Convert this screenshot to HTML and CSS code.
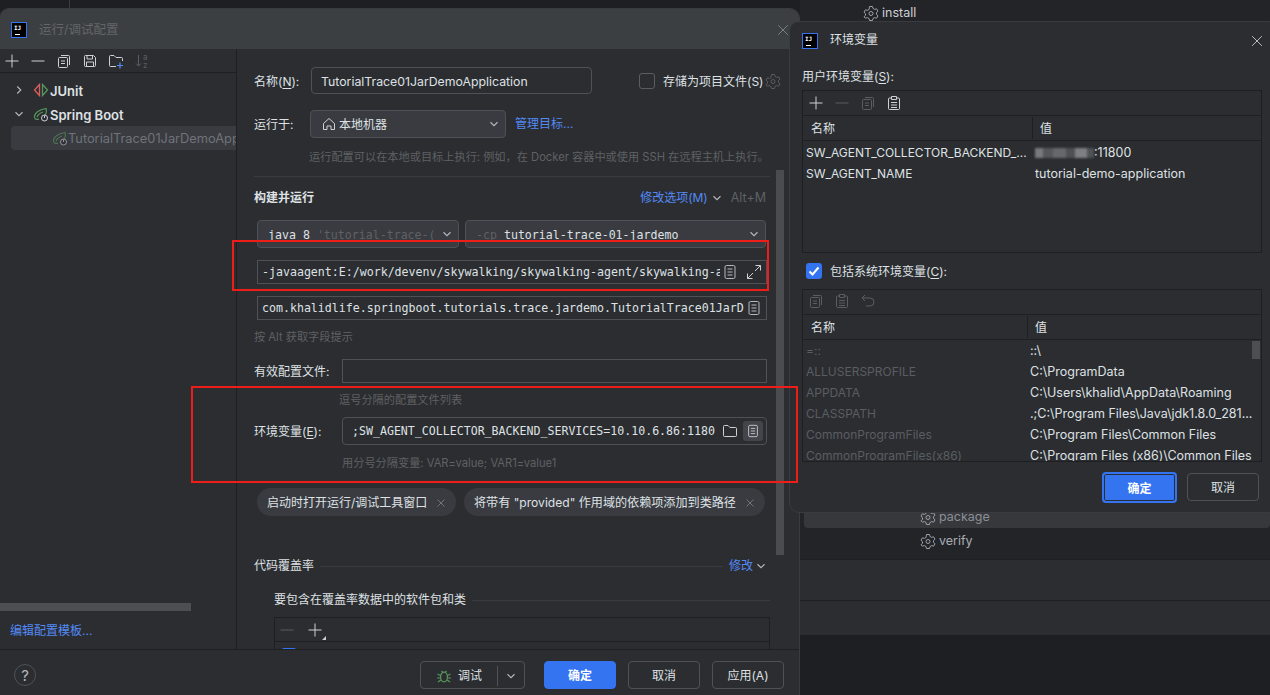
FILE: index.html
```html
<!DOCTYPE html>
<html lang="zh">
<head>
<meta charset="utf-8">
<title>运行/调试配置</title>
<link rel="stylesheet" href="styles.css">
</head>
<body>
<svg class="defs" width="0" height="0">
  <symbol id="gear" viewBox="0 0 16 16"><path d="M6.500 1.500h3l.5 2 1.600.9 2-.6 1.400 2.400-1.500 1.400v1.800l1.500 1.400-1.400 2.400-2-.6-1.600.9-.5 2h-3l-.5-2-1.600-.9-2 .6L1 11.800l1.500-1.400V8.600L1 7.200l1.400-2.400 2 .6L6 4.500z" fill="none" stroke="currentColor"/><circle cx="8" cy="8.500" r="2" fill="none" stroke="currentColor"/></symbol>
  <symbol id="copy" viewBox="0 0 16 16"><path d="M5 2.500h7.500a1 1 0 0 1 1 1V12M2.500 5.500a1 1 0 0 1 1-1h7a1 1 0 0 1 1 1v8a1 1 0 0 1-1 1h-7a1 1 0 0 1-1-1zM5 8h4M5 10.500h4" fill="none" stroke="currentColor"/></symbol>
  <symbol id="paste" viewBox="0 0 16 16"><path d="M5 3H3.500a1 1 0 0 0-1 1v9.500a1 1 0 0 0 1 1h9a1 1 0 0 0 1-1V4a1 1 0 0 0-1-1H11M5.500 1.500h5v3h-5zM5 7.500h6M5 10h6M5 12.500h6" fill="none" stroke="currentColor"/></symbol>
  <symbol id="plus" viewBox="0 0 16 16"><path d="M8 1.500v13M1.500 8h13" fill="none" stroke="currentColor"/></symbol>
  <symbol id="minus" viewBox="0 0 16 16"><path d="M1.500 8h13" fill="none" stroke="currentColor"/></symbol>
  <symbol id="chev" viewBox="0 0 16 16"><path d="M4 6l4 4 4-4" fill="none" stroke="currentColor" stroke-width="1.300"/></symbol>
  <symbol id="doc" viewBox="0 0 16 16"><rect x="3" y="1.500" width="10" height="13" rx="1.500" fill="none" stroke="currentColor"/><path d="M5.500 5h5M5.500 8h5M5.500 11h5" stroke="currentColor"/></symbol>
  <symbol id="spring" viewBox="0 0 16 16"><path d="M1.500 12C1 7 6 3.500 13 2.500c1 3.500-.5 6.500-2 8M1.500 12.500C3 13.500 5 13.500 6 13M4 11c1-2.500 3-4 6-5" fill="none" stroke="#57965c" stroke-width="1.200"/><circle cx="11.500" cy="12" r="3" fill="#2b2d30" stroke="#ced0d6"/><path d="M11.500 9.500v2.500" stroke="#ced0d6"/></symbol>
</svg>

<div class="ide">
  <div class="ide-left"><span class="ide-tick"></span></div>
  <div class="ide-right">
    <div class="maven-row maven-top"><svg class="ic16 gear-dim"><use href="#gear"/></svg><span>install</span></div>
    <div class="maven-selected"><svg class="ic16 gear-dim"><use href="#gear"/></svg><span>package</span></div>
    <div class="maven-row maven-verify"><svg class="ic16 gear-dim"><use href="#gear"/></svg><span>verify</span></div>
    <div class="band band-a"></div>
    <div class="band band-b"></div>
  </div>
</div>

<section class="win win-main">
  <header class="win-title">
    <span class="ij"><b>IJ</b><i></i></span>
    <span class="title-text">运行/调试配置</span>
    <svg class="ic16 close-dim" viewBox="0 0 16 16"><path d="M2.500 2.500l11 11M13.500 2.500l-11 11" fill="none" stroke="currentColor"/></svg>
  </header>
  <div class="main-body">
    <aside class="side">
      <div class="side-tools">
        <svg class="ic16"><use href="#plus"/></svg>
        <svg class="ic16"><use href="#minus"/></svg>
        <svg class="ic16"><use href="#copy"/></svg>
        <svg class="ic16" viewBox="0 0 16 16"><path d="M2.500 3.500a1 1 0 0 1 1-1h8l2 2v8a1 1 0 0 1-1 1h-9a1 1 0 0 1-1-1zM5 2.500v3.500h5.500V2.500M4.500 13.500V9h7v4.500" fill="none" stroke="currentColor"/></svg>
        <svg class="ic16" viewBox="0 0 16 16"><path d="M8 13.500H2.500a1 1 0 0 1-1-1v-9a1 1 0 0 1 1-1h3.500l2 2h5.500a1 1 0 0 1 1 1V8" fill="none" stroke="currentColor"/><path d="M12 9.500v6M9 12.500h6" stroke="#548af7" stroke-width="1.200"/></svg>
        <svg class="ic16 dim" viewBox="0 0 16 16"><path d="M4.500 2v11M2 10.500l2.500 2.500 2.500-2.500" fill="none" stroke="currentColor"/><text x="9" y="7" class="sort-l">a</text><text x="9" y="15" class="sort-l">z</text></svg>
      </div>
      <div class="tree">
        <div class="tree-row">
          <svg class="ic-chev side-r" viewBox="0 0 16 16"><path d="M6 4l4 4-4 4" fill="none" stroke="currentColor" stroke-width="1.300"/></svg>
          <svg class="ic16" viewBox="0 0 16 16"><path d="M6.500 2.500L1.500 8l5 5.500z" fill="none" stroke="#db5c5c" stroke-width="1.300"/><path d="M9.500 2.500l5 5.500-5 5.500z" fill="none" stroke="#57965c" stroke-width="1.300"/></svg>
          <strong>JUnit</strong>
        </div>
        <div class="tree-row">
          <svg class="ic-chev"><use href="#chev"/></svg>
          <svg class="ic16"><use href="#spring"/></svg>
          <strong>Spring Boot</strong>
        </div>
        <div class="tree-row tree-sel">
          <svg class="ic16 faded"><use href="#spring"/></svg>
          <span>TutorialTrace01JarDemoApplication</span>
        </div>
      </div>
      <div class="side-bottom">
        <div class="hscroll"></div>
        <a class="link side-link">编辑配置模板...</a>
      </div>
    </aside>
    <main class="form">
      <div class="vscroll"></div>
      <div class="row row-name">
        <label class="lbl lbl-name">名称(<u>N</u>):</label>
        <div class="input input-name">TutorialTrace01JarDemoApplication</div>
        <span class="check"></span>
        <span class="check-label">存储为项目文件(S)</span>
        <svg class="ic16 dim gear-s"><use href="#gear"/></svg>
      </div>
      <div class="row row-run">
        <label class="lbl lbl-run">运行于:</label>
        <div class="combo combo-run">
          <svg class="ic16 home" viewBox="0 0 16 16"><path d="M2.500 7.500L8 2.500l5.500 5v6h-3.500V10H6v3.500H2.500z" fill="none" stroke="currentColor"/></svg>
          <span class="grow">本地机器</span>
          <svg class="ic-chev"><use href="#chev"/></svg>
        </div>
        <a class="link manage">管理目标...</a>
      </div>
      <p class="hint hint-run">运行配置可以在本地或目标上执行: 例如，在 Docker 容器中或使用 SSH 在远程主机上执行。</p>
      <div class="sep"></div>
      <div class="section section-build">
        <h2>构建并运行</h2>
        <a class="link mod">修改选项(M)</a>
        <svg class="ic-chev side-c"><use href="#chev"/></svg>
        <span class="alt">Alt+M</span>
      </div>
      <div class="row row-combos">
        <div class="combo combo-java mono"><span class="grow clip">java 8 <em>'tutorial-trace-(</em></span><svg class="ic-chev"><use href="#chev"/></svg></div>
        <div class="combo combo-cp mono"><span class="grow clip"><em>-cp</em> tutorial-trace-01-jardemo</span><svg class="ic-chev"><use href="#chev"/></svg></div>
      </div>
      <div class="box box-agent mono">
        <span class="clip grow">-javaagent:E:/work/devenv/skywalking/skywalking-agent/skywalking-a</span>
        <svg class="ic16 doc"><use href="#doc"/></svg>
        <svg class="ic16 expand" viewBox="0 0 16 16"><path d="M9.500 1.500h5v5M14.500 1.500L9 7M6.500 14.500h-5v-5M1.500 14.500L7 9" fill="none" stroke="currentColor"/></svg>
      </div>
      <div class="box box-main mono">
        <span class="clip grow">com.khalidlife.springboot.tutorials.trace.jardemo.TutorialTrace01JarD</span>
        <svg class="ic16 doc"><use href="#doc"/></svg>
      </div>
      <p class="hint hint-alt">按 Alt 获取字段提示</p>
      <div class="row row-profile">
        <label class="lbl lbl-long">有效配置文件:</label>
        <div class="box box-profile"></div>
      </div>
      <p class="hint hint-profile">逗号分隔的配置文件列表</p>
      <div class="row row-env">
        <label class="lbl lbl-long">环境变量(<u>E</u>):</label>
        <div class="input input-env mono">
          <span class="clip grow">;SW_AGENT_COLLECTOR_BACKEND_SERVICES=10.10.6.86:1180</span>
          <svg class="ic16 folder" viewBox="0 0 16 16"><path d="M1.500 12.500v-9a1 1 0 0 1 1-1h3.500l2 2h5.500a1 1 0 0 1 1 1v7a1 1 0 0 1-1 1h-11a1 1 0 0 1-1-1z" fill="none" stroke="currentColor"/></svg>
          <span class="doc-hover"><svg class="ic16 doc-in"><use href="#doc"/></svg></span>
        </div>
      </div>
      <p class="hint hint-env">用分号分隔变量: VAR=value; VAR1=value1</p>
      <div class="row row-chips">
        <span class="chip chip-a">启动时打开运行/调试工具窗口<svg class="chip-x" viewBox="0 0 10 10"><path d="M1.500 1.500l7 7M8.500 1.500l-7 7" fill="none" stroke="currentColor"/></svg></span>
        <span class="chip chip-b">将带有 "provided" 作用域的依赖项添加到类路径<svg class="chip-x" viewBox="0 0 10 10"><path d="M1.500 1.500l7 7M8.500 1.500l-7 7" fill="none" stroke="currentColor"/></svg></span>
      </div>
      <div class="section section-cov">
        <span class="cov-title">代码覆盖率</span>
        <span class="rule"></span>
        <a class="link cov-mod">修改</a>
        <svg class="ic-chev"><use href="#chev"/></svg>
      </div>
      <div class="section section-inc">
        <span class="cov-title">要包含在覆盖率数据中的软件包和类</span>
        <span class="rule"></span>
      </div>
      <div class="cov-table">
        <div class="cov-tools">
          <svg class="ic16 dim"><use href="#minus"/></svg>
          <span class="plus-wrap"><svg class="ic16"><use href="#plus"/></svg><span class="corner"></span></span>
        </div>
        <div class="cov-row"><span class="mini-check"></span></div>
      </div>
    </main>
  </div>
  <footer class="foot">
    <span class="help">?</span>
    <span class="grow"></span>
    <div class="btn btn-split">
      <span class="btn-main">
        <svg class="ic16 bug" viewBox="0 0 16 16"><ellipse cx="8" cy="9" rx="3.500" ry="4.800" fill="none" stroke="#57965c" stroke-width="1.300"/><path d="M5.500 3l1.500 1.500M10.500 3L9 4.500M1.500 6l3 1.500M14.500 6l-3 1.500M1 10h3M15 10h-3M2 14l2.800-2M14 14l-2.800-2" stroke="#57965c" stroke-width="1.200" fill="none"/></svg>调试
      </span>
      <span class="btn-arrow"><svg class="ic-chev"><use href="#chev"/></svg></span>
    </div>
    <button class="btn btn-primary">确定</button>
    <button class="btn">取消</button>
    <button class="btn">应用(A)</button>
  </footer>
</section>

<section class="win win-env">
  <header class="env-title">
    <span class="ij"><b>IJ</b><i></i></span>
    <span class="env-title-text">环境变量</span>
    <svg class="ic16 close-bright" viewBox="0 0 16 16"><path d="M2.500 2.500l11 11M13.500 2.500l-11 11" fill="none" stroke="currentColor"/></svg>
  </header>
  <div class="env-label">用户环境变量(<u>S</u>):</div>
  <div class="tbl tbl-user">
    <div class="tbl-tools">
      <svg class="ic16"><use href="#plus"/></svg>
      <svg class="ic16 dim"><use href="#minus"/></svg>
      <svg class="ic16 dim"><use href="#copy"/></svg>
      <svg class="ic16"><use href="#paste"/></svg>
    </div>
    <div class="tbl-head cols-a"><span>名称</span><span class="col-line">值</span></div>
    <div class="tbl-row cols-a"><span class="clip name-cell">SW_AGENT_COLLECTOR_BACKEND_...</span><span class="val-cell"><i class="blur"></i>:11800</span></div>
    <div class="tbl-row cols-a"><span class="clip name-cell">SW_AGENT_NAME</span><span class="val-cell">tutorial-demo-application</span></div>
  </div>
  <div class="env-check">
    <span class="check-on"><svg viewBox="0 0 16 16"><path d="M3.500 8.500l3 3 6-7" fill="none" stroke="#fff" stroke-width="2"/></svg></span>
    <span class="env-check-text">包括系统环境变量(<u>C</u>):</span>
  </div>
  <div class="tbl tbl-sys">
    <div class="sys-thumb"></div>
    <div class="tbl-tools">
      <svg class="ic16 dim"><use href="#copy"/></svg>
      <svg class="ic16 dim"><use href="#paste"/></svg>
      <svg class="ic16 dim" viewBox="0 0 16 16"><path d="M5 2L2 5l3 3M2 5h8a4 4 0 0 1 0 8H6" fill="none" stroke="currentColor"/></svg>
    </div>
    <div class="tbl-head cols-b"><span>名称</span><span class="col-line">值</span></div>
    <div class="tbl-row cols-b"><span class="muted">=::</span><span class="val-cell">::\</span></div>
    <div class="tbl-row cols-b"><span class="muted">ALLUSERSPROFILE</span><span class="val-cell">C:\ProgramData</span></div>
    <div class="tbl-row cols-b"><span class="muted">APPDATA</span><span class="val-cell">C:\Users\khalid\AppData\Roaming</span></div>
    <div class="tbl-row cols-b"><span class="muted">CLASSPATH</span><span class="val-cell">.;C:\Program Files\Java\jdk1.8.0_281...</span></div>
    <div class="tbl-row cols-b"><span class="muted">CommonProgramFiles</span><span class="val-cell">C:\Program Files\Common Files</span></div>
    <div class="tbl-row cols-b"><span class="muted">CommonProgramFiles(x86)</span><span class="val-cell">C:\Program Files (x86)\Common Files</span></div>
  </div>
  <div class="env-foot">
    <button class="btn btn-primary btn-focus">确定</button>
    <button class="btn btn-cancel">取消</button>
  </div>
</section>

<div class="mark mark-a"></div>
<div class="mark mark-b"></div>
</body>
</html>
```
FILE: styles.css
```css
* { box-sizing: border-box; }
html, body { margin: 0; padding: 0; }
body {
  width: 1270px; height: 695px; overflow: hidden; position: relative;
  background: #1e1f22; color: #dfe1e5;
  font: 12px/18px Inter, "Noto Sans CJK SC", sans-serif;
}
.defs { position: absolute; }
p, h2 { margin: 0; font: inherit; }
u { text-underline-offset: 2px; }
em { font-style: normal; color: #5f6164; }
.grow { flex: 1 1 0; min-width: 0; }
.clip { overflow: hidden; white-space: nowrap; display: block; }
.mono { font-family: "DejaVu Sans Mono", monospace; font-size: 11.6px; }
.ic16 { width: 16px; height: 16px; flex: none; color: #ced0d6; display: block; }
.ic-chev { width: 14px; height: 14px; flex: none; color: #b4b8bf; display: block; }
.dim { color: #5a5d63; }
.link { color: #548af7; }

/* background IDE */
.ide { position: absolute; inset: 0; display: flex; }
.ide-left { width: 800px; position: relative; }
.ide-tick { position: absolute; left: 69px; top: 0; width: 1px; height: 8px; background: #393b40; }
.ide-right { flex: 1; position: relative; background: linear-gradient(#232428 0, #232428 559px, #1e1f22 559px); color: #a8adb5; font-size: 12.5px; }
.maven-row, .maven-selected { display: flex; align-items: center; gap: 3px; position: absolute; }
.maven-top { left: 63px; top: 4px; color: #ced0d6; }
.maven-selected { left: 4px; right: 0; top: 500px; height: 28px; padding: 6px 0 0 116px; background: #36383c; border-radius: 4px; color: #8b9097; }
.maven-verify { left: 120px; top: 532px; }
.gear-dim { color: #9da0a8; }
.band { position: absolute; left: 0; right: 0; background: #2b2d30; border-top: 1px solid #1e1f22; }
.band-a { top: 559px; height: 41px; }
.band-b { top: 600px; height: 35px; }

/* windows */
.win { position: absolute; background: #2b2d30; overflow: hidden; border: 1px solid #393b40; }
.win-main { left: -1px; top: 8px; width: 801px; height: 688px; border-radius: 10px 10px 0 0; display: flex; flex-direction: column; }
.win-env { left: 789px; top: 21px; width: 490px; height: 492px; border-radius: 10px; }

.ij { width: 16px; height: 16px; background: #000; border: 1px solid #3574f0; display: block; position: relative; flex: none; }
.ij b { position: absolute; left: 2px; top: 2px; font: bold 6px/6px "DejaVu Sans Mono", monospace; letter-spacing: 0; color: #fff; }
.ij i { position: absolute; left: 3px; bottom: 2px; width: 5px; height: 1px; background: #fff; }

.win-title { height: 40px; flex: none; background: #3c3f41; display: flex; align-items: center; padding: 2px 9px 0 11px; }
.title-text { margin-left: 12px; flex: 1; color: #62656a; font-size: 12.5px; }
.close-dim { color: #85888d; width: 14px; height: 14px; }

.main-body { flex: 1 1 0; min-height: 0; display: flex; }
.side { width: 237px; flex: none; border-right: 1px solid #1e1f22; display: flex; flex-direction: column; position: relative; }
.side-tools { height: 24px; display: flex; align-items: center; gap: 10px; padding-left: 4px; border-bottom: 1px solid #1e1f22; flex: none; }
.tree { padding: 5px 0 0 11px; flex: 1 1 0; overflow: hidden; font-size: 13px; }
.tree-row { height: 24px; display: flex; align-items: center; gap: 1px; white-space: nowrap; padding-left: 1px; }
.tree-row strong, .tree-row span { padding-top: 2px; }
.tree-row strong { font-weight: 600; }
.side-r { margin-right: 5px; }
.tree-row .ic-chev { margin-right: 6px; }
.tree-sel { background: #393b40; border-radius: 4px 0 0 4px; padding-left: 41px; color: #6f737a; gap: 0; overflow: hidden; font-size: 12.8px; }
.faded { opacity: .6; }
.sort-l { font: 8px Inter, sans-serif; fill: currentColor; }
.side-bottom { height: 46px; flex: none; }
.hscroll { width: 191px; height: 8px; background: #4d4e51; }
.side-link { display: block; margin: 11px 0 0 10px; }

/* form */
.form { flex: 1 1 0; min-width: 0; position: relative; padding: 18px 29px 0 17px; overflow: hidden; }
.vscroll { position: absolute; right: 15px; top: 121px; width: 8px; height: 385px; background: #4a4c50; }
.row { display: flex; align-items: center; }
.lbl { flex: none; white-space: nowrap; padding-top: 2px; }
.lbl-name { width: 57px; }
.lbl-run { width: 56px; }
.lbl-long { width: 88px; }
.input, .box, .combo { border: 1px solid #4e5157; display: flex; align-items: center; flex: none; }
.input { border-radius: 4px; height: 27px; }
.input-name { width: 281px; padding: 2px 0 0 9px; font-size: 12.3px; }
.check { width: 16px; height: 16px; border: 1px solid #5a5d63; border-radius: 3px; margin-left: 47px; flex: none; }
.check-label { margin-left: 8px; white-space: nowrap; padding-top: 2px; }
.gear-s { margin-left: 2px; }
.row-run { margin-top: 16px; }
.combo { height: 28px; border-radius: 4px; background: #393b40; }
.combo .grow { padding-top: 2px; }
.combo-run { width: 196px; padding: 0 4px 0 10px; }
.home { margin-right: 2px; }
.manage { margin-left: 9px; }
.hint { color: #5f6164; white-space: nowrap; font-size: 11.2px; }
.hint-run { margin: 10px 0 0 55px; }
.sep { height: 1px; background: #393b40; margin-top: 10px; }
.section { display: flex; align-items: center; height: 20px; margin-top: 10px; padding-top: 2px; }
.section-build { margin-right: 4px; }
.section h2 { font-weight: 600; flex: 1; }
.mod { margin-right: 2px; }
.side-c { margin-right: 7px; }
.alt { color: #5f6164; font-size: 12.5px; }
.row-combos { margin: 13px 0 0 3px; gap: 6px; }
.combo-java { width: 202px; padding: 0 4px 0 10px; }
.combo-cp { width: 301px; padding: 0 4px 0 10px; }
.box { height: 24px; margin: 12px 0 0 3px; padding-left: 4px; }
.box-agent { width: 510px; padding-right: 4px; }
.box-agent .expand { margin-left: 8px; }
.box-main { width: 510px; padding-right: 4px; }
.doc { color: #b4b8bf; margin-left: 2px; }
.hint-alt { margin-top: 8px; }
.row-profile { margin-top: 13px; }
.box-profile { width: 425px; margin: 0; }
.hint-profile { margin: 8px 0 0 85px; }
.row-env { margin-top: 8px; }
.input-env { width: 425px; height: 28px; padding: 0 3px 0 9px; }
.folder { margin-left: 3px; }
.doc-hover { width: 20px; height: 20px; background: #43454a; border-radius: 3px; display: flex; align-items: center; justify-content: center; margin-left: 5px; flex: none; }
.doc-in { width: 14px; height: 14px; }
.hint-env { margin: 9px 0 0 88px; }
.row-chips { margin: 16px 0 0 3px; gap: 8px; }
.chip { height: 28px; border-radius: 14px; background: #393b40; display: flex; align-items: center; white-space: nowrap; padding: 2px 10px 0 10px; flex: none; justify-content: space-between; }
.chip-a { width: 199px; }
.chip-b { width: 301px; font-size: 12.1px; }
.chip-x { width: 10px; height: 10px; color: #6f737a; flex: none; }
.section-cov { margin: 39px 2px 0 0; gap: 6px; }
.cov-title { white-space: nowrap; flex: none; }
.rule { flex: 1; height: 1px; background: #393b40; }
.cov-mod { flex: none; margin-right: -5px; }
.section-inc { margin: 14px 0 0 20px; gap: 6px; width: 496px; }
.cov-table { margin: 8px 0 0 20px; width: 496px; border: 1px solid #1e1f22; }
.cov-tools { height: 24px; display: flex; align-items: center; gap: 12px; padding-left: 4px; border-bottom: 1px solid #1e1f22; }
.plus-wrap { position: relative; display: block; }
.corner { position: absolute; right: -3px; bottom: -2px; border: 2px solid transparent; border-right-color: #ced0d6; border-bottom-color: #ced0d6; }
.mini-check { display: block; width: 14px; height: 14px; margin: 6px 0 0 7px; background: #3574f0; border-radius: 2px; }

/* footer */
.foot { height: 46px; flex: none; border-top: 1px solid #1e1f22; display: flex; align-items: center; padding: 5px 15px 0 14px; gap: 12px; }
.help { width: 22px; height: 22px; border: 1px solid #4e5157; border-radius: 50%; text-align: center; line-height: 21px; font-size: 15px; color: #b4b8bf; flex: none; }
.btn { height: 28px; width: 72px; border: 1px solid #4e5157; border-radius: 4px; background: transparent; color: #dfe1e5; font: inherit; display: flex; align-items: center; justify-content: center; padding: 2px 0 0; flex: none; }
.btn-primary { background: #3574f0; border-color: #3574f0; color: #fff; font-weight: 600; }
.btn-split { width: 105px; margin-right: 7px; justify-content: flex-start; }
.btn-main { width: 77px; display: flex; align-items: center; justify-content: center; gap: 6px; border-right: 1px solid #4e5157; height: 20px; flex: none; }
.btn-arrow { flex: 1; display: flex; justify-content: center; }

/* env dialog */
.env-title { display: flex; align-items: center; height: 36px; padding: 0 14px 0 12px; }
.env-title .ij { margin-top: 2px; }
.env-title-text { margin-left: 12px; flex: 1; }
.close-bright { width: 14px; height: 14px; margin-top: 2px; }
.env-label { margin: 10px 0 0 12px; height: 18px; }
.tbl { margin: 4px 0 0 12px; width: 460px; border: 1px solid #1e1f22; overflow: hidden; position: relative; }
.tbl-user { height: 163px; }
.tbl-sys { height: 173px; margin-top: 10px; }
.tbl-tools { height: 25px; display: flex; align-items: center; gap: 10px; padding: 0 0 2px 5px; border-bottom: 1px solid #1e1f22; }
.tbl-user .tbl-tools { padding-bottom: 0; }
.tbl-head { height: 25px; border-bottom: 1px solid #1e1f22; align-items: center; }
.tbl-head span:first-child { padding: 2px 0 0 8px; }
.cols-a { display: grid; grid-template-columns: 229px 1fr; }
.cols-b { display: grid; grid-template-columns: 224px 1fr; }
.col-line { border-left: 1px solid #1e1f22; height: 22px; padding-left: 7px; line-height: 24px; }
.tbl-row { height: 21px; align-items: center; white-space: nowrap; padding-left: 3px; }
.tbl-user .tbl-row { padding-top: 2px; }
.tbl-row .clip { width: 222px; }
.val-cell { display: flex; align-items: center; font-size: 12.5px; }
.blur { width: 59px; height: 10px; flex: none; filter: blur(1px); background: linear-gradient(90deg, #77797d 0 14%, #55575b 14% 30%, #66686c 30% 52%, #4e5054 52% 68%, #7d7f83 68% 88%, #505256 88%); }
.muted { color: #5a5d63; }
.sys-thumb { position: absolute; right: 1px; top: 51px; width: 8px; height: 18px; background: #4d4e51; }
.env-check { display: flex; align-items: center; gap: 8px; margin: 10px 0 0 16px; height: 16px; }
.env-check-text { padding-top: 2px; }
.check-on { width: 16px; height: 16px; background: #3574f0; border-radius: 3px; display: block; flex: none; }
.check-on svg { display: block; width: 16px; height: 16px; }
.env-foot { display: flex; justify-content: flex-end; align-items: flex-start; gap: 10px; padding: 10px 19px 0 0; }
.btn-focus { height: 31px; width: 75px; box-shadow: inset 0 0 0 1px #2b2d30; border: 2px solid #3574f0; }
.btn-cancel { margin-top: 1px; }

/* annotations */
.mark { position: absolute; border: 2px solid #ef1d17; }
.mark-a { left: 232px; top: 240px; width: 537px; height: 51px; }
.mark-b { left: 191px; top: 386px; width: 607px; height: 97px; }
```
